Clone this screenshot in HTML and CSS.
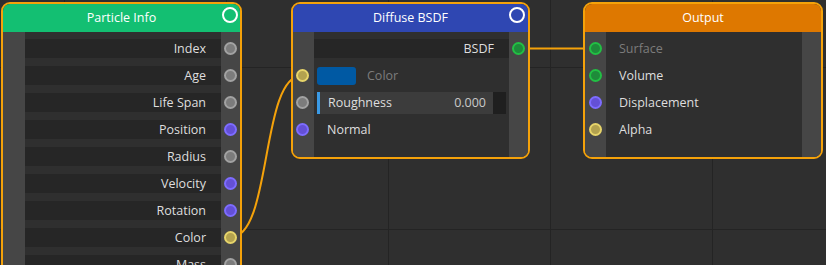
FILE: index.html
```html
<!DOCTYPE html>
<html lang="en">
<head>
    <meta charset="UTF-8">
    <title>Node Editor</title>
    <link rel="stylesheet" href="styles.css">
</head>
<body>
    <div class="canvas">
        <svg class="wires" width="826" height="265" viewBox="0 0 826 265">
            <path d="M230.5 237.5 C272.5 237.5 260 75.5 302 75.5"/>
            <path d="M519 48.5 L594 48.5"/>
        </svg>

        <!-- Particle Info -->
        <div class="node node-particle">
            <div class="node-head head-green">Particle Info<i class="head-ring"></i></div>
            <div class="node-body">
                <div class="row"><span></span><div class="bar right">Index</div><span class="sock gray"></span></div>
                <div class="row"><span></span><div class="bar right">Age</div><span class="sock gray"></span></div>
                <div class="row"><span></span><div class="bar right">Life Span</div><span class="sock gray"></span></div>
                <div class="row"><span></span><div class="bar right">Position</div><span class="sock purple"></span></div>
                <div class="row"><span></span><div class="bar right">Radius</div><span class="sock gray"></span></div>
                <div class="row"><span></span><div class="bar right">Velocity</div><span class="sock purple"></span></div>
                <div class="row"><span></span><div class="bar right">Rotation</div><span class="sock purple"></span></div>
                <div class="row"><span></span><div class="bar right">Color</div><span class="sock yellow"></span></div>
                <div class="row"><span></span><div class="bar right">Mass</div><span class="sock gray"></span></div>
            </div>
        </div>

        <!-- Diffuse BSDF -->
        <div class="node node-diffuse">
            <div class="node-head head-blue">Diffuse BSDF<i class="head-ring"></i></div>
            <div class="node-body">
                <div class="row"><span></span><div class="bar right">BSDF</div><span class="sock green"></span></div>
                <div class="row"><span class="sock yellow"></span><div class="field"><span class="swatch"></span><span class="dim">Color</span></div><span></span></div>
                <div class="row"><span class="sock gray"></span><div class="slider"><div class="slider-fill"><span>Roughness</span><span class="value">0.000</span></div><div class="slider-end"></div></div><span></span></div>
                <div class="row"><span class="sock purple"></span><div class="label">Normal</div><span></span></div>
            </div>
        </div>

        <!-- Output -->
        <div class="node node-output">
            <div class="node-head head-orange">Output</div>
            <div class="node-body">
                <div class="row"><span class="sock green"></span><div class="label dim">Surface</div><span></span></div>
                <div class="row"><span class="sock green"></span><div class="label">Volume</div><span></span></div>
                <div class="row"><span class="sock purple"></span><div class="label">Displacement</div><span></span></div>
                <div class="row"><span class="sock yellow"></span><div class="label">Alpha</div><span></span></div>
            </div>
        </div>
    </div>
</body>
</html>
```

FILE: styles.css
```css
* { margin: 0; padding: 0; box-sizing: border-box; }

body {
    font-family: "Open Sans", "Noto Sans", sans-serif;
    font-size: 12.5px;
    color: #dedede;
    background: #2f2f2f;
    overflow: hidden;
}

.canvas {
    position: relative;
    width: 826px;
    height: 265px;
    overflow: hidden;
    background-color: #2f2f2f;
    background-image:
        linear-gradient(to right, #242424 1px, transparent 1px),
        linear-gradient(to bottom, #242424 1px, transparent 1px);
    background-size: 162px 162px;
    background-position: 64px 67px;
}

.wires {
    position: absolute;
    left: 0;
    top: 0;
}

.wires path {
    fill: none;
    stroke: #f5a20a;
    stroke-width: 2;
}

/* nodes sit on a free canvas */
.node {
    position: absolute;
    top: 2px;
    border: 2px solid #f5a20a;
    border-radius: 9px;
    overflow: hidden;
    --left-col: 21px;
    --right-col: 19px;
}

.node-particle { left: 1px; width: 241px; height: 285px; --left-col: 22px; }
.node-diffuse { left: 291px; width: 239px; }
.node-output { left: 583px; width: 240px; }

.node-head {
    position: relative;
    height: 28px;
    line-height: 28px;
    text-align: center;
    color: #fff;
}

.head-green { background: #13bf72; }
.head-blue { background: #2f47b2; }
.head-orange { background: #de7800; }

.head-ring {
    position: absolute;
    right: 2px;
    top: 3px;
    width: 16px;
    height: 16px;
    border: 2px solid #fff;
    border-radius: 50%;
}

.node-body {
    padding: 3px 0 14px;
    background: linear-gradient(to right,
        #464646 var(--left-col), #2f2f2f var(--left-col),
        #2f2f2f calc(100% - var(--right-col)), #464646 calc(100% - var(--right-col)));
}

.row {
    display: grid;
    grid-template-columns: var(--left-col) 1fr var(--right-col);
    align-items: center;
    justify-items: center;
    height: 27px;
}

.row > div { justify-self: stretch; }

.bar {
    height: 19px;
    line-height: 19px;
    background: #262626;
}

.bar.right {
    text-align: right;
    padding-right: 15px;
}

.label {
    padding-left: 13px;
}

.dim { color: #7c7c7c; }

.sock {
    width: 13px;
    height: 13px;
    border-radius: 50%;
    border: 2px solid;
}

.sock.gray { background: #7c7c7c; border-color: #a2a2a2; }
.sock.purple { background: #6450d6; border-color: #7d6cff; }
.sock.yellow { background: #b3a24f; border-color: #e6d46a; }
.sock.green { background: #1e8b3a; border-color: #22bf44; }

.node-diffuse .node-head .head-ring { right: 3px; }
.node-diffuse .sock { margin-left: -2px; }
.node-diffuse .row > .sock.green { margin-left: 0; }

.field {
    display: flex;
    align-items: center;
    gap: 11px;
    padding-left: 3px;
}

.swatch {
    width: 39px;
    height: 18px;
    border-radius: 3px;
    background: #0059a3;
}

.slider {
    display: flex;
    height: 22px;
    margin: 0 3px;
}

.slider-fill {
    flex: 1;
    display: flex;
    justify-content: space-between;
    align-items: center;
    background: #3c3c3c;
    border-left: 3px solid #3a9ae6;
    padding: 0 7px 0 8px;
}

.slider-fill .value { color: #c9c9c9; }

.slider-end {
    width: 13px;
    background: #1f1f1f;
}
```
